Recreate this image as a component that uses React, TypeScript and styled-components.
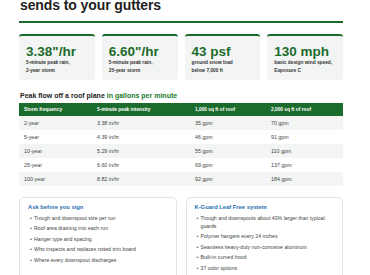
import React from "react";
import styled, { createGlobalStyle } from "styled-components";

const stats = [
  { value: "3.38\"/hr", label: ["5-minute peak rain,", "2-year storm"] },
  { value: "6.60\"/hr", label: ["5-minute peak rain,", "25-year storm"] },
  { value: "43 psf", label: ["ground snow load", "below 7,000 ft"] },
  { value: "130 mph", label: ["basic design wind speed,", "Exposure C"] },
];

const rows = [
  ["2-year", "3.38 in/hr", "35 gpm", "70 gpm"],
  ["5-year", "4.39 in/hr", "46 gpm", "91 gpm"],
  ["10-year", "5.29 in/hr", "55 gpm", "110 gpm"],
  ["25-year", "6.60 in/hr", "69 gpm", "137 gpm"],
  ["100-year", "8.82 in/hr", "92 gpm", "184 gpm"],
];

const askList = [
  "Trough and downspout size per run",
  "Roof area draining into each run",
  "Hanger type and spacing",
  "Who inspects and replaces rotted trim board",
  "Where every downspout discharges",
];

const kGuardList = [
  "Trough and downspouts about 40% larger than typical guards",
  "Polymer hangers every 24 inches",
  "Seamless heavy-duty non-corrosive aluminum",
  "Built-in curved hood",
  "37 color options",
];

const App = () => {
  return (
    <>
      <GlobalStyle />
      <Page>
        <Heading>sends to your gutters</Heading>
        <StatGrid>
          {stats.map((s) => (
            <StatCard key={s.value}>
              <StatValue>{s.value}</StatValue>
              <StatLabel>
                {s.label[0]}
                <br />
                {s.label[1]}
              </StatLabel>
            </StatCard>
          ))}
        </StatGrid>

        <SectionTitle>
          Peak flow off a roof plane <Green>in gallons per minute</Green>
        </SectionTitle>
        <FlowTable>
          <colgroup>
            <col style={{ width: 73 }} />
            <col style={{ width: 98 }} />
            <col style={{ width: 76 }} />
            <col />
          </colgroup>
          <thead>
            <tr>
              <HeadCell>Storm frequency</HeadCell>
              <HeadCell>5-minute peak intensity</HeadCell>
              <HeadCell>1,000 sq ft of roof</HeadCell>
              <HeadCell>2,000 sq ft of roof</HeadCell>
            </tr>
          </thead>
          <tbody>
            {rows.map((r) => (
              <Row key={r[0]}>
                {r.map((c) => (
                  <Cell key={c}>{c}</Cell>
                ))}
              </Row>
            ))}
          </tbody>
        </FlowTable>

        <InfoGrid>
          <InfoBox>
            <InfoTitle>Ask before you sign</InfoTitle>
            <BulletList>
              {askList.map((item) => (
                <li key={item}>{item}</li>
              ))}
            </BulletList>
          </InfoBox>
          <InfoBox>
            <InfoTitle>K-Guard Leaf Free system</InfoTitle>
            <BulletList>
              {kGuardList.map((item) => (
                <li key={item}>{item}</li>
              ))}
            </BulletList>
          </InfoBox>
        </InfoGrid>
      </Page>
    </>
  );
};

export default App;

const GlobalStyle = createGlobalStyle`
  html, body {
    margin: 0;
    padding: 0;
    background: #ffffff;
    overflow: hidden;
  }
  body {
    font-family: "Liberation Sans", Arial, sans-serif;
    color: #222;
  }
`;

const Page = styled.div`
  width: 324px;
  margin-left: 19px;
`;

const Heading = styled.h1`
  margin: -3px 0 0;
  padding: 0 0 7px 1px;
  font-size: 14px;
  line-height: 17px;
  font-weight: 700;
  letter-spacing: -0.1px;
  color: #222;
  border-bottom: 2px solid #1b6b2c;
`;

const StatGrid = styled.div`
  display: grid;
  grid-template-columns: repeat(4, 1fr);
  gap: 7px;
  margin-top: 11px;
`;

const StatCard = styled.div`
  background: #f3f5f4;
  border-top: 2px solid #1b6b2c;
  border-radius: 3px;
  padding: 8px 6px 6px 7px;
  height: 46px;
  box-sizing: border-box;
  height: 46px;
`;

const StatValue = styled.div`
  font-size: 13.5px;
  line-height: 15px;
  font-weight: 700;
  color: #1b6b2c;
`;

const StatLabel = styled.div`
  font-size: 4.8px;
  line-height: 7.5px;
  font-weight: 700;
  color: #333;
`;

const SectionTitle = styled.h2`
  margin: 11px 0 0 1px;
  font-size: 7px;
  line-height: 9px;
  font-weight: 700;
  color: #222;
`;

const Green = styled.span`
  color: #1b7a2e;
`;

const FlowTable = styled.table`
  width: 100%;
  margin-top: 3px;
  border-collapse: collapse;
  table-layout: fixed;
`;

const HeadCell = styled.th`
  background: #1b6b2c;
  color: #fff;
  font-size: 4.8px;
  font-weight: 700;
  text-align: left;
  height: 13px;
  padding: 0 5px;
`;

const Row = styled.tr`
  &:nth-child(odd) {
    background: #f3f5f4;
  }
`;

const Cell = styled.td`
  font-size: 5.3px;
  color: #444;
  height: 14px;
  padding: 0 5px;
`;

const InfoGrid = styled.div`
  display: grid;
  grid-template-columns: 1fr 1fr;
  gap: 9px;
  margin-top: 11px;
`;

const InfoBox = styled.div`
  border: 1px solid #dfe5ec;
  border-radius: 5px;
  padding: 5px 8px 12px;
  min-height: 90px;
`;

const InfoTitle = styled.h3`
  margin: 0;
  font-size: 5.8px;
  line-height: 8px;
  font-weight: 700;
  color: #1f6db0;
`;

const BulletList = styled.ul`
  list-style: none;
  margin: 3px 0 0;
  padding: 0 0 0 6px;

  li {
    position: relative;
    font-size: 5.2px;
    line-height: 8px;
    color: #444;
    margin-bottom: 2.4px;
  }

  li::before {
    content: "•";
    position: absolute;
    left: -4px;
    top: 0;
    color: #555;
  }
`;
